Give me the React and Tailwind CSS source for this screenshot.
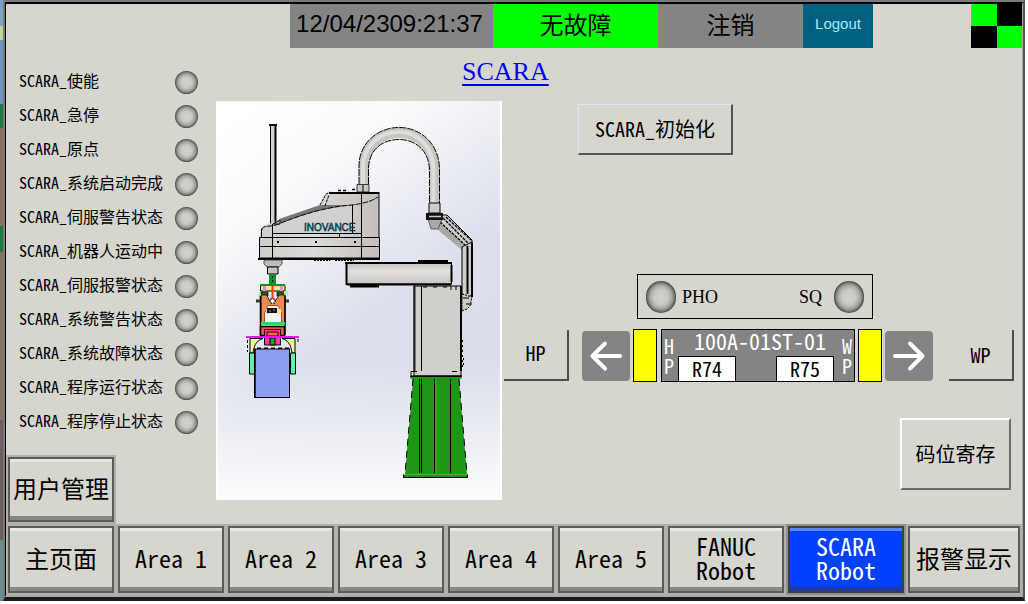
import React from "react";

const statusItems = [
  "SCARA_使能",
  "SCARA_急停",
  "SCARA_原点",
  "SCARA_系统启动完成",
  "SCARA_伺服警告状态",
  "SCARA_机器人运动中",
  "SCARA_伺服报警状态",
  "SCARA_系统警告状态",
  "SCARA_系统故障状态",
  "SCARA_程序运行状态",
  "SCARA_程序停止状态",
];

const navItems = [
  { lines: ["主页面"] },
  { lines: ["Area 1"] },
  { lines: ["Area 2"] },
  { lines: ["Area 3"] },
  { lines: ["Area 4"] },
  { lines: ["Area 5"] },
  { lines: ["FANUC", "Robot"] },
  { lines: ["SCARA", "Robot"], active: true },
  { lines: ["报警显示"] },
];

function Lamp({ className }) {
  return (
    <span
      className={`block shrink-0 rounded-full bg-[radial-gradient(closest-side,#d2d2cc_0%,#cbcbc5_45%,#a4a49f_75%,#6c6c69_92%,#454543_100%)] ${className}`}
    />
  );
}

function PanelButton({ lines, active, className = "" }) {
  return (
    <button
      className={`border-2 text-2xl leading-6 ${
        active ? "border-[#8f918c]" : "border-[#b0b1aa]"
      } ${className}`}
    >
      <span
        className={`flex h-full flex-col items-center justify-center border-2 pb-1 whitespace-nowrap ${
          active
            ? "border-[#3c3e40] bg-[#0040ff] text-white shadow-[inset_0_3px_0_#5c86ff,inset_0_-4px_0_#1c3c9c]"
            : "border-[#5a5c5a] bg-[#d6d6ce] shadow-[inset_0_3px_0_#e6e6e2,inset_0_-4px_0_#868883]"
        }`}
      >
        {lines.map((line) => (
          <span key={line}>{line}</span>
        ))}
      </span>
    </button>
  );
}

function ArrowButton({ direction }) {
  return (
    <button
      aria-label={direction}
      className="flex h-[50px] w-12 shrink-0 items-center justify-center rounded bg-[#848484]"
    >
      <svg
        viewBox="0 0 48 50"
        className="h-full w-full"
        fill="none"
        stroke="#fff"
        strokeWidth="4"
        strokeLinecap="round"
        strokeLinejoin="round"
      >
        {direction === "left" ? (
          <path d="M38 25H11M23 12.500L10.500 25L23 37.500" />
        ) : (
          <path d="M10 25H37M25 12.500L37.500 25L25 37.500" />
        )}
      </svg>
    </button>
  );
}

function Header() {
  return (
    <header className="flex h-11 text-2xl">
      <div className="ml-[284px] flex w-[203px] items-center justify-center bg-[#848484] pr-1 pb-1 font-['Liberation_Sans',sans-serif]">
        <span>12/04/23</span>
        <span>09:21:37</span>
      </div>
      <div className="flex w-[165px] items-center justify-center bg-[#00ff00] pb-1">
        无故障
      </div>
      <button className="w-[145px] bg-[#848484] pb-1">注销</button>
      <button className="w-[70px] bg-[#00607f] pb-1 font-['Liberation_Sans',sans-serif] text-[15px] text-[#a9eaf5]">
        Logout
      </button>
      <div className="ml-auto grid w-[51px] grid-cols-2">
        <span className="bg-[#00ff00]" />
        <span className="bg-black" />
        <span className="bg-black" />
        <span className="bg-[#00ff00]" />
      </div>
    </header>
  );
}

function RobotDrawing() {
  return (
    <svg
      viewBox="216 101 286 399"
      className="h-[399px] w-[286px] shrink-0"
      role="img"
      aria-label="SCARA robot"
    >
      <defs>
        <linearGradient id="sky" x1="0.1" y1="0" x2="0.5" y2="0.8">
          <stop offset="0" stopColor="#fff" />
          <stop offset="0.3" stopColor="#fafafc" />
          <stop offset="0.75" stopColor="#dde0eb" />
          <stop offset="1" stopColor="#dbdeea" />
        </linearGradient>
        <linearGradient id="floor" x1="0" y1="0" x2="0" y2="1">
          <stop offset="0.65" stopColor="#fff" stopOpacity="0" />
          <stop offset="0.85" stopColor="#fff" stopOpacity="0.5" />
          <stop offset="1" stopColor="#fff" stopOpacity="0.95" />
        </linearGradient>
        <linearGradient id="cover">
          <stop offset="0" stopColor="#cfcdca" />
          <stop offset="0.45" stopColor="#dddbd9" />
          <stop offset="1" stopColor="#c2bfbc" />
        </linearGradient>
        <linearGradient id="link" x1="0" y1="0" x2="0" y2="1">
          <stop offset="0" stopColor="#c6c2c0" />
          <stop offset="0.4" stopColor="#e2dfdd" />
          <stop offset="1" stopColor="#c8c6c4" />
        </linearGradient>
      </defs>
      <rect x="216" y="101" width="286" height="399" fill="#fff" />
      <rect x="218" y="101" width="282" height="399" fill="url(#sky)" />
      <rect x="218" y="101" width="282" height="399" fill="url(#floor)" />

      {/* cable hose */}
      <path d="M364 186V168C364 146 380 133 399 133C419 133 434.500 148 434.500 170V204" fill="none" stroke="#c5c4c1" strokeWidth="10" />
      <path d="M363 186V168C363 145 380 132 399 132C418 132 433.500 147 433.500 170V204" fill="none" stroke="#deddda" strokeWidth="4" />
      <path d="M359 184V166C359 143 378 127.500 399 127.500C421 127.500 439.500 144 439.500 170V203M368.500 184V169C368.500 151 381 139.500 399 139.500C416 139.500 429.500 151 429.500 171V203" fill="none" stroke="#000" strokeDasharray="7 1" />
      <path d="M357 184.500h12v7.500h-12z" fill="#c8c7c4" stroke="#111" strokeWidth="0.8" />
      <path d="M429 203h11v10h-11z" fill="#cfcecb" stroke="#000" />
      <path d="M363 185v8" stroke="#000" />

      {/* elbow bracket and return duct */}
      <path d="M442 215L447 215L472 240L472 244L464 250L439 230Z" fill="#cccbc8" stroke="#000" />
      <path d="M440 223L464 245L462 250L438 230Z" fill="#a9a8a5" />
      <path d="M440 222L465 245M443 218L468 243M446 217L471 240" stroke="#000" strokeWidth="1.300" strokeDasharray="3 1" />
      <path d="M462 247L472 242V295L466 298L462 293Z" fill="#cfcecb" stroke="#000" />
      <path d="M467.500 246V294M472 243V297" stroke="#000" strokeWidth="2" />
      <path d="M428 219H442L438 229H431Z" fill="#aaa9a6" stroke="#333" strokeWidth="0.7" />
      <rect x="426" y="213" width="17" height="7" fill="#111" />
      <path d="M429 216.500H441" stroke="#c7c7c7" strokeWidth="1.500" />
      <path d="M462 294L472 297L470 306L467 309L462 311Z" fill="#cbcac7" stroke="#000" strokeDasharray="2 1" />
      <path d="M463 298H469M466 304H472" stroke="#000" />

      {/* column */}
      <rect x="414" y="286" width="47" height="90" fill="#d0cfcc" stroke="#000" />
      <path d="M414.500 286V371" stroke="#222" strokeWidth="2" />
      <path d="M461 286V371" stroke="#000" strokeWidth="2" />
      <path d="M421.500 286V371M411 371.500H417M452 371.500H457M423 287h4M433 287h4M443 287h4M451 286v4M456 286v4" stroke="#000" />
      <path d="M462.500 340V369M463.500 358V366" stroke="#000" strokeDasharray="2 3" />
      <path d="M411 371.500V376H462" fill="none" stroke="#000" />

      {/* pedestal */}
      <path d="M410.500 376H461.500V379H459L467 474.500H405L413 379H410.500Z" fill="#1f9618" />
      <path d="M413 379L405 474M459 379L467 474" stroke="#000" strokeDasharray="7 5" />
      <path d="M403.500 474.500V477.500H467.500V474.500" fill="#1f9618" stroke="#000" />
      <path d="M410 376.500H462M419.500 379V473M421.500 379V473M434.500 379V473M450.500 379V473" stroke="#000" />
      <path d="M436 379V473" stroke="#3eb436" />

      {/* lower link */}
      <rect x="346.500" y="263" width="105" height="21" fill="url(#link)" stroke="#000" />
      <path d="M345 263H452M346.500 262V285" stroke="#000" strokeWidth="2" />
      <path d="M347 284.500H451M418 261H448M350 286.500H379" stroke="#000" strokeWidth="2" />
      <path d="M451.500 265v17" stroke="#000" strokeWidth="2" />

      {/* spindle */}
      <rect x="270.500" y="125" width="5" height="110" fill="#d0cfcc" stroke="#000" />
      <path d="M275.500 125V224" stroke="#000" strokeWidth="2" />
      <path d="M269 125H277" stroke="#000" strokeWidth="2" />

      {/* upper arm */}
      <path d="M320 206L325 195L330 192.500H379V259H259.500V237L261 228C264 224 274 223 280 220C294 215 307 211 320 206Z" fill="url(#cover)" />
      <path d="M273 226C296 217 325 207 352 205V233H273Z" fill="#d3d1cf" />
      <path d="M279 219L320 205H352C328 207 308 213 281 223Z" fill="#797877" />
      <path d="M262 230C262 225 270 227 276 225C300 215 325 207 352 205C366 203 372 201 378 197" fill="none" stroke="#000" strokeDasharray="6 1" />
      <path d="M320 205L326 194L330 192M325 206L329 195" fill="none" stroke="#000" strokeDasharray="3 1" />
      <path d="M329 193H379" stroke="#000" strokeWidth="2" />
      <path d="M338 190.500h3M343 190.500h3M352 189.500h3" stroke="#000" strokeWidth="1.500" />
      <path d="M379 192V237M352.500 205V233M361.500 192V259M272.500 224V259M261.500 229V237M273 233.500H361M339.500 233V237" fill="none" stroke="#000" />
      <path d="M259.500 237.500H379.500V258H259.500ZM259 246.500H379" fill="none" stroke="#000" />
      <path d="M258 259H380" stroke="#000" strokeWidth="2" />
      <path d="M314 260.500H330M335 260.500H354" stroke="#000" strokeDasharray="2 1" />
      <path d="M277 242h2M315 242h2M354 242h2" stroke="#000" strokeWidth="2" />
      <path d="M273 224l7-4v4z" stroke="#000" fill="#bbb" />
      <text x="304" y="231" fontSize="10" fontFamily="Liberation Sans, sans-serif" fill="#1398d6" stroke="#012" strokeWidth="0.5">
        INOVANCE
      </text>

      {/* quill */}
      <path d="M264 260H282V264L279 267H267L264 264Z" fill="#bfbdba" stroke="#333" strokeWidth="0.8" />
      <path d="M267.500 267H278V274H267.500Z" fill="#c6c4c1" stroke="#000" />

      {/* gripper */}
      <rect x="269" y="274" width="7" height="11" fill="#0f8f25" />
      <path d="M272.500 276v8" stroke="#000" strokeDasharray="2 2" />
      <path d="M260.500 285.500H285V291H260.500Z" fill="#f7e48c" stroke="#000" />
      <path d="M260 285H285" stroke="#0f8f25" strokeWidth="2" />
      <path d="M263 286h3v5h-3zM280 286h3v5h-3z" fill="#f08ad0" />
      <path d="M261 292h7v4h-7zM277 292h8v4h-8z" fill="#0b6f20" stroke="#000" strokeWidth="0.7" />
      <path d="M284 291h4v4h-4zM258 294h3v4h-3z" fill="#b8f58c" />
      <path d="M261 295H267L269 300H276L279 295H285V323H281V313L278 306H268L265 313V323H261Z" fill="#f28a50" stroke="#000" strokeWidth="0.8" />
      <path d="M265 313L268 306H278L281 313V322H265Z" fill="#f5f5f5" />
      <path d="M266 309h4v5h-4zM277 309h4v5h-4z" fill="#f7e48c" />
      <path d="M267 308H277V313H267Z" fill="#111" />
      <path d="M269 311h2M273 310h2" stroke="#5da0e0" />
      <path d="M272.500 286V299" stroke="#ff3818" strokeWidth="2" />
      <path d="M270 299h5v4h-5z" fill="#fff" stroke="#000" strokeDasharray="2 1" />
      <path d="M256 301h4M285 301h4" stroke="#333" strokeWidth="3" />
      <path d="M260.500 296V335M285 296V335" stroke="#000" strokeWidth="1.500" />
      <rect x="261" y="322" width="24" height="3" fill="#2ed863" />
      <rect x="260.500" y="326.500" width="24" height="9" fill="#ef5638" stroke="#000" strokeWidth="1.500" />
      <path d="M264.500 329.500H280.500V345H264.500Z" fill="#fb37a0" stroke="#111" />
      <path d="M267 332h11v4h-11z" fill="#ff633d" stroke="#111" />
      <path d="M270 338H275V345H270Z" fill="#20a032" stroke="#000" />
      <path d="M250 338.500H263C255 341 254 347 253 353H250ZM295 338.500H282C290 341 291 347 292 353H295Z" fill="#faf0a0" stroke="#000" />
      <path d="M257 348.500H289" stroke="#000" strokeWidth="2" strokeDasharray="4 3" />
      <path d="M249.500 353H254.500V374H249.500ZM290.500 353H295.500V374H290.500Z" fill="#62f0a8" stroke="#000" />
      <path d="M246 337H299" stroke="#f411ee" strokeWidth="2" />
      <path d="M247.500 340V352M298 339V343" stroke="#000" strokeDasharray="3 2" />
      <rect x="254.500" y="349" width="35" height="48.500" fill="#8d9df3" stroke="#000" />
      <path d="M255 349V398" stroke="#000" strokeWidth="1.500" />
    </svg>
  );
}

function StationLabel() {
  return (
    <div className="mr-[3px] ml-1 flex h-[53px] w-[194px] shrink-0 justify-between border border-black bg-[#848484] px-0.5 text-xl text-white">
      <div className="flex flex-col justify-center leading-5">
        <span>H</span>
        <span>P</span>
      </div>
      <div className="flex flex-1 flex-col justify-between pl-1">
        <span className="text-center text-[22px] leading-5">100A-01ST-01</span>
        <div className="flex justify-between pr-2 text-black">
          <span className="w-[58px] border border-b-0 border-black bg-white text-center leading-6">
            R74
          </span>
          <span className="w-[58px] border border-b-0 border-black bg-white text-center leading-6">
            R75
          </span>
        </div>
      </div>
      <div className="flex flex-col justify-center leading-5">
        <span>W</span>
        <span>P</span>
      </div>
    </div>
  );
}

function Controls() {
  return (
    <section className="flex flex-1 flex-col pr-2 pl-0.5 text-xl">
      <button className="mt-[3px] ml-[74px] h-[51px] w-[155px] border border-r-2 border-b-2 border-[#e4e2f6] border-r-[#55525c] border-b-[#55525c]">
        SCARA_初始化
      </button>
      <div className="mt-[119px] ml-[133px] flex h-[45px] w-[236px] items-center border border-black px-2 font-['Liberation_Serif',serif] text-lg">
        <Lamp className="h-8 w-[30px]" />
        <span className="ml-1.5">PHO</span>
        <span className="mr-3 ml-auto">SQ</span>
        <Lamp className="h-8 w-[30px]" />
      </div>
      <div className="mt-2.5 flex items-center">
        <button className="mr-[13px] h-[51px] w-[65px] border-r-2 border-b-2 border-[#4e4d4b] pb-1">
          HP
        </button>
        <ArrowButton direction="left" />
        <span className="ml-[3px] h-[53px] w-6 border border-black bg-[#ffff00]" />
        <StationLabel />
        <span className="mr-[3px] h-[53px] w-6 border border-black bg-[#ffff00]" />
        <ArrowButton direction="right" />
        <button className="ml-auto h-[51px] w-[65px] border-r-2 border-b-2 border-[#4e4d4b]">
          WP
        </button>
      </div>
      <button className="mt-9 mr-[3px] h-[72px] w-[111px] self-end border-2 border-white border-r-[#6a6b6b] border-b-[#6a6b6b]">
        码位寄存
      </button>
    </section>
  );
}

export default function App() {
  return (
    <div className="flex min-h-screen bg-white pr-[3px] pb-[3px] font-['Noto_Sans_CJK_SC',sans-serif] text-black [font-feature-settings:'hwid']">
      <div className="w-[3px] bg-[linear-gradient(#7fa3c4_0_26px,#b7d89a_26px_40px,#6f93bd_40px_104px,#1d7a45_104px_128px,#8b6f66_128px_226px,#1d7a45_226px_252px,#8a716b_252px_420px,#6e5f62_420px_540px,#6e8b94_540px)]" />
      <div className="flex flex-1 border-2 border-b-4 border-[#777a79] border-r-[#555756] border-b-[#1a1a1a]">
        <div className="flex flex-1 flex-col border-t-2 border-r border-b-2 border-l border-black border-r-[#a5a7a3] border-b-[#aaaba6] bg-[#d6d6ce]">
          <Header />
          <main className="flex flex-1">
            <aside className="flex w-[210px] flex-col pt-[17px]">
              <ul className="pr-[18px] pl-[13px]">
                {statusItems.map((item) => (
                  <li key={item} className="flex h-[34px] items-center justify-between">
                    <span className="pb-1">{item}</span>
                    <Lamp className="h-[23px] w-[23px]" />
                  </li>
                ))}
              </ul>
              <PanelButton
                lines={["用户管理"]}
                className="mt-auto h-[69px] w-[110px]"
              />
            </aside>
            <div className="flex flex-1 flex-col">
              <h1 className="ml-[246px] h-[53px] pt-1 font-['Liberation_Serif',serif] text-[26px] text-[#0000ff] underline decoration-2 underline-offset-4">
                SCARA
              </h1>
              <div className="flex">
                <RobotDrawing />
                <Controls />
              </div>
            </div>
          </main>
          <nav className="grid h-[71px] grid-cols-[repeat(6,110fr)_120fr_120fr_116fr]">
            {navItems.map((item) => (
              <PanelButton
                key={item.lines.join(" ")}
                lines={item.lines}
                active={item.active}
              />
            ))}
          </nav>
        </div>
      </div>
    </div>
  );
}
